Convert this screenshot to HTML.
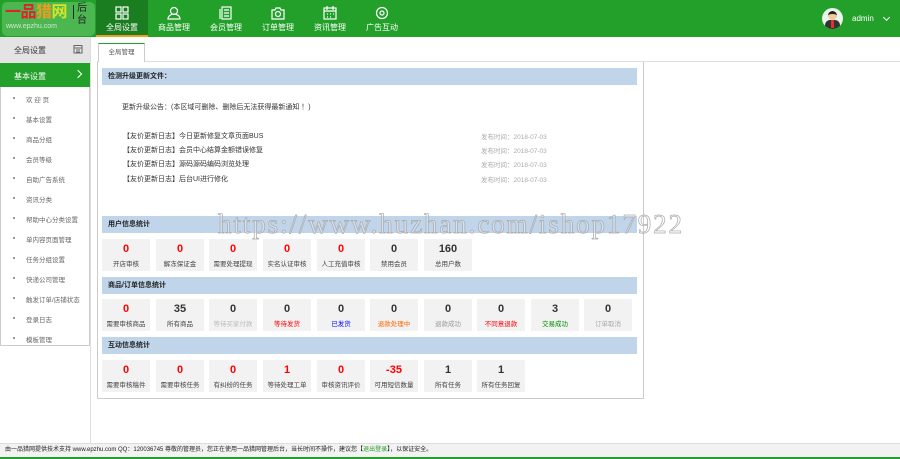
<!DOCTYPE html><html><head><meta charset="utf-8"><style>
*{margin:0;padding:0;box-sizing:border-box}
body{width:900px;height:459px;overflow:hidden;background:#fff;font-family:"Liberation Sans","Noto Sans CJK SC",sans-serif;font-size:7px;color:#333;position:relative}
.a{position:absolute}
.hdr{left:0;top:0;width:900px;height:37px;background:#22a02a}
.nav{top:0;width:52px;height:37px;color:#fff;text-align:center;font-size:8px}
.nav svg{position:absolute;left:19px;top:6px}
.nav span{position:absolute;left:0;right:0;top:22px}
.bar{left:102px;width:535px;height:17px;background:#c0d4ea;font-weight:bold;font-size:7px;line-height:17px;padding-left:6px;color:#222}
.box{width:48px;height:32px;background:#f2f2f2;text-align:center}
.box b{display:block;font-size:11px;margin-top:4px;line-height:12px}
.box i{display:block;font-style:normal;font-size:6.5px;margin-top:3px;color:#444}
.side{left:13px;font-size:6.5px;color:#666}
.side:before{content:"";position:absolute;left:0;top:3px;width:2px;height:2px;background:#999}
.side span{margin-left:13px}
.log{left:123px;font-size:7px;color:#333}
.dt{left:481px;font-size:6.5px;color:#aaa}
</style></head><body>
<div class="a hdr"></div>
<div class="a" style="left:2px;top:2px;width:93px;height:34px;background:#4cb651;border-radius:5px"></div>
<div class="a" style="left:5px;top:4px;font-size:16px;line-height:18px;font-weight:bold;letter-spacing:-0.5px"><span style="color:#e3212a">一品</span><span style="color:#f29a1e">猎</span><span style="color:#d6e428">网</span></div>
<div class="a" style="left:6px;top:23px;font-size:7px;color:#cfe8cf">www.epzhu.com</div>
<div class="a" style="left:73px;top:5px;width:1px;height:14px;background:#222"></div>
<div class="a" style="left:77px;top:3px;font-size:10px;line-height:12px;color:#222;width:11px">后台</div>
<div class="a" style="left:96px;top:0;width:52px;height:37px;background:#1a7d1f"></div>
<div class="a" style="left:96px;top:35px;width:52px;height:2px;background:#f0a020"></div>
<div class="a nav" style="left:96px"><svg width="14" height="14" fill="none" stroke="#fff" stroke-width="1.2"><rect x="1" y="1" width="5" height="5"/><rect x="8" y="1" width="5" height="5"/><rect x="1" y="8" width="5" height="5"/><rect x="8" y="8" width="5" height="5"/></svg><span>全局设置</span></div>
<div class="a nav" style="left:148px"><svg width="14" height="14" fill="none" stroke="#fff" stroke-width="1.2"><circle cx="7" cy="5" r="3.5"/><path d="M1 13c0-3 3-5 6-5s6 2 6 5z"/></svg><span>商品管理</span></div>
<div class="a nav" style="left:200px"><svg width="14" height="14" fill="none" stroke="#fff" stroke-width="1.2"><rect x="3" y="1" width="9" height="12"/><path d="M1 3v10M5 4h5M5 7h5M5 10h5"/></svg><span>会员管理</span></div>
<div class="a nav" style="left:252px"><svg width="14" height="14" fill="none" stroke="#fff" stroke-width="1.2"><path d="M1 4h3l1-2h4l1 2h3v9H1z"/><circle cx="7" cy="8" r="2.5"/></svg><span>订单管理</span></div>
<div class="a nav" style="left:304px"><svg width="14" height="14" fill="none" stroke="#fff" stroke-width="1.2"><rect x="1" y="2" width="12" height="11"/><path d="M1 5h12M4 0v4M10 0v4M4 8h1M7 8h1M10 8h1M4 11h1M7 11h1"/></svg><span>资讯管理</span></div>
<div class="a nav" style="left:356px"><svg width="14" height="14" fill="none" stroke="#fff" stroke-width="1.2"><circle cx="7" cy="7" r="5.5"/><circle cx="7" cy="7" r="2"/></svg><span>广告互动</span></div>
<div class="a" style="left:822px;top:8px;width:21px;height:21px;border-radius:50%;background:#e8f5e8;overflow:hidden"><div class="a" style="left:6px;top:3px;width:9px;height:9px;border-radius:50%;background:#f2c9a0;border-top:3px solid #222"></div><div class="a" style="left:3px;top:12px;width:15px;height:10px;border-radius:5px 5px 0 0;background:#333"></div><div class="a" style="left:9px;top:12px;width:3px;height:8px;background:#d33"></div></div>
<div class="a" style="left:852px;top:14px;color:#fff;font-size:8px">admin</div>
<div class="a" style="left:884px;top:15px;width:5px;height:5px;border-right:1px solid #fff;border-bottom:1px solid #fff;transform:rotate(45deg)"></div>
<div class="a" style="left:0;top:37px;width:90px;height:26px;background:#e4e4e4"></div>
<div class="a" style="left:14px;top:45px;font-size:8px;color:#333">全局设置</div>
<svg class="a" style="left:73px;top:44px" width="10" height="10" fill="none" stroke="#666"><rect x="1" y="1.5" width="8" height="7.5"/><path d="M1 4h8M3 6h4M3 8h4"/></svg>
<div class="a" style="left:90px;top:37px;width:1px;height:406px;background:#ddd"></div>
<div class="a" style="left:0;top:63px;width:90px;height:283px;border:1px solid #ccc;border-top:0"></div>
<div class="a" style="left:0;top:63px;width:90px;height:24px;background:#22a02a"></div>
<div class="a" style="left:14px;top:71px;font-size:8px;color:#fff">基本设置</div>
<div class="a" style="left:75px;top:71px;width:6px;height:6px;border-right:1.3px solid #fff;border-top:1.3px solid #fff;transform:rotate(45deg)"></div>
<div class="a side" style="top:94px"><span>欢 迎 页</span></div>
<div class="a side" style="top:114px"><span>基本设置</span></div>
<div class="a side" style="top:134px"><span>商品分组</span></div>
<div class="a side" style="top:154px"><span>会员等级</span></div>
<div class="a side" style="top:174px"><span>自助广告系统</span></div>
<div class="a side" style="top:194px"><span>资讯分类</span></div>
<div class="a side" style="top:214px"><span>帮助中心分类设置</span></div>
<div class="a side" style="top:234px"><span>单内容页面管理</span></div>
<div class="a side" style="top:254px"><span>任务分组设置</span></div>
<div class="a side" style="top:274px"><span>快递公司管理</span></div>
<div class="a side" style="top:294px"><span>触发订单/店铺状态</span></div>
<div class="a side" style="top:314px"><span>登录日志</span></div>
<div class="a side" style="top:334px"><span>模板管理</span></div>
<div class="a" style="left:97px;top:61px;width:803px;height:1px;background:#ddd"></div>
<div class="a" style="left:98px;top:43px;width:47px;height:19px;background:#fff;border:1px solid #ccc;border-top:1.5px solid #22a02a;border-bottom:0;font-size:6.5px;color:#555;text-align:center;line-height:17px">全局管理</div>
<div class="a" style="left:97px;top:62px;width:547px;height:337px;border:1px solid #ccc;border-top:0"></div>
<div class="a bar" style="top:68px">检测升级更新文件：</div>
<div class="a" style="left:122px;top:102px;font-size:7px">更新升级公告：(本区域可删除、删除后无法获得最新通知 ！)</div>
<div class="a log" style="top:131px">【友价更新日志】今日更新修复文章页面BUS</div><div class="a dt" style="top:131px">发布时间：2018-07-03</div>
<div class="a log" style="top:145px">【友价更新日志】会员中心结算金额错误修复</div><div class="a dt" style="top:145px">发布时间：2018-07-03</div>
<div class="a log" style="top:159px">【友价更新日志】源码源码编码浏览处理</div><div class="a dt" style="top:159px">发布时间：2018-07-03</div>
<div class="a log" style="top:174px">【友价更新日志】后台UI进行修化</div><div class="a dt" style="top:174px">发布时间：2018-07-03</div>
<div class="a bar" style="top:216px">用户信息统计</div>
<div class="a bar" style="top:277px">商品/订单信息统计</div>
<div class="a bar" style="top:337px">互动信息统计</div>
<div class="a box" style="left:102px;top:239px"><b style="color:#f00">0</b><i>开店审核</i></div>
<div class="a box" style="left:156px;top:239px"><b style="color:#f00">0</b><i>解冻保证金</i></div>
<div class="a box" style="left:209px;top:239px"><b style="color:#f00">0</b><i>需要处理提现</i></div>
<div class="a box" style="left:263px;top:239px"><b style="color:#f00">0</b><i>实名认证审核</i></div>
<div class="a box" style="left:317px;top:239px"><b style="color:#f00">0</b><i>人工充值审核</i></div>
<div class="a box" style="left:370px;top:239px"><b>0</b><i>禁用会员</i></div>
<div class="a box" style="left:424px;top:239px"><b>160</b><i>总用户数</i></div>
<div class="a box" style="left:102px;top:299px"><b style="color:#f00">0</b><i>需要审核商品</i></div>
<div class="a box" style="left:156px;top:299px"><b>35</b><i>所有商品</i></div>
<div class="a box" style="left:209px;top:299px"><b>0</b><i style="color:#bbb">等待买家付款</i></div>
<div class="a box" style="left:263px;top:299px"><b>0</b><i style="color:#f00">等待发货</i></div>
<div class="a box" style="left:317px;top:299px"><b>0</b><i style="color:#00f">已发货</i></div>
<div class="a box" style="left:370px;top:299px"><b>0</b><i style="color:#f60">退款处理中</i></div>
<div class="a box" style="left:424px;top:299px"><b>0</b><i style="color:#999">退款成功</i></div>
<div class="a box" style="left:477px;top:299px"><b>0</b><i style="color:#f00">不同意退款</i></div>
<div class="a box" style="left:531px;top:299px"><b>3</b><i style="color:#080">交易成功</i></div>
<div class="a box" style="left:584px;top:299px"><b>0</b><i style="color:#aaa">订单取消</i></div>
<div class="a box" style="left:102px;top:360px"><b style="color:#f00">0</b><i>需要审核稿件</i></div>
<div class="a box" style="left:156px;top:360px"><b style="color:#f00">0</b><i>需要审核任务</i></div>
<div class="a box" style="left:209px;top:360px"><b style="color:#f00">0</b><i>有纠纷的任务</i></div>
<div class="a box" style="left:263px;top:360px"><b style="color:#f00">1</b><i>等待处理工单</i></div>
<div class="a box" style="left:317px;top:360px"><b style="color:#f00">0</b><i>审核资讯评价</i></div>
<div class="a box" style="left:370px;top:360px"><b style="color:#f00">-35</b><i>可用短信数量</i></div>
<div class="a box" style="left:424px;top:360px"><b>1</b><i>所有任务</i></div>
<div class="a box" style="left:477px;top:360px"><b>1</b><i>所有任务回复</i></div>
<div class="a" style="left:0;top:443px;width:900px;height:14px;background:#f2f2f2;border-top:1px solid #ddd;font-size:6px;line-height:13px;padding-left:5px;color:#222">由一品猎网提供技术支持 www.epzhu.com QQ：120036745 尊敬的管理员，您正在使用一品猎网管理后台，当长时间不操作，建议您【<span style="color:#22a02a">退出登录</span>】，以保证安全。</div>
<div class="a" style="left:0;top:457px;width:900px;height:2px;background:#22a02a"></div>
<div class="a" style="left:218px;top:209px;font-family:'Liberation Serif',serif;font-size:27px;color:rgba(255,255,255,0.3);-webkit-text-stroke:0.7px #aaa;letter-spacing:1.9px;white-space:nowrap">https://www.huzhan.com/ishop17922</div>
</body></html>
